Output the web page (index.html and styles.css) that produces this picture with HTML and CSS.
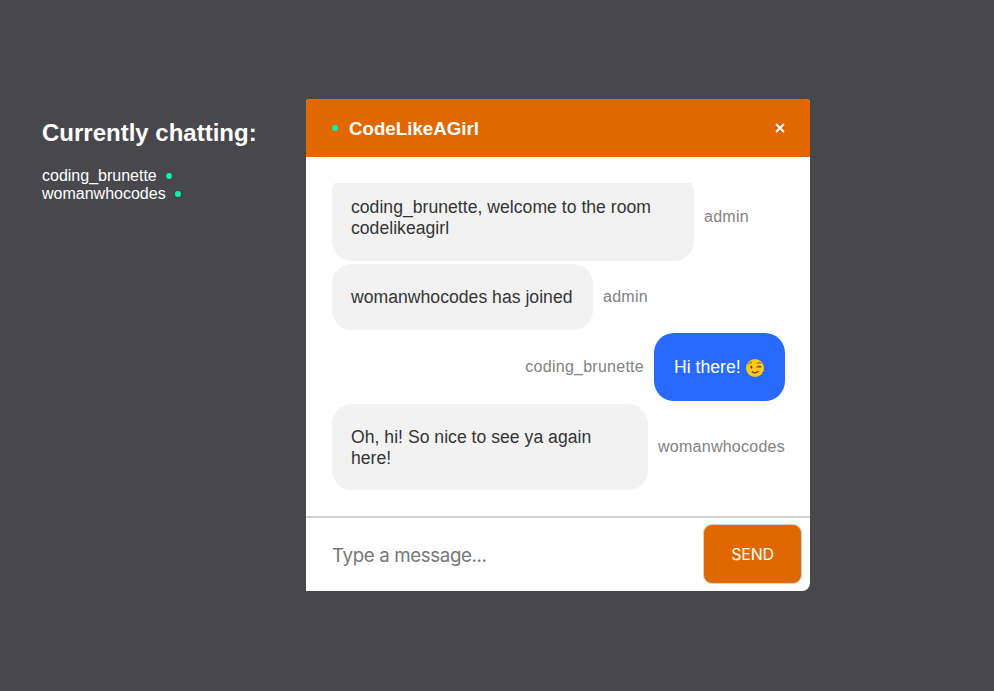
FILE: index.html
```html
<!DOCTYPE html>
<html lang="en">
<head>
<meta charset="utf-8">
<title>CodeLikeAGirl</title>
<link rel="stylesheet" href="styles.css">
</head>
<body>
<main class="page">
  <aside class="people">
    <h2>Currently chatting:</h2>
    <ul>
      <li><span>coding_brunette</span><i class="dot"></i></li>
      <li><span>womanwhocodes</span><i class="dot"></i></li>
    </ul>
  </aside>
  <section class="chat">
    <header class="bar">
      <i class="dot"></i>
      <h3>CodeLikeAGirl</h3>
      <svg class="close" viewBox="0 0 10 10"><path d="M1 1 9 9M9 1 1 9"/></svg>
    </header>
    <div class="messages">
      <div class="row"><p class="bubble welcome">coding_brunette, welcome to the room codelikeagirl</p><span class="name">admin</span></div>
      <div class="row"><p class="bubble joined">womanwhocodes has joined</p><span class="name">admin</span></div>
      <div class="row mine"><span class="name">coding_brunette</span><p class="bubble blue"><span>Hi there!</span>
        <svg class="wink" viewBox="0 0 18 18"><circle cx="9" cy="9" r="9" fill="#fcc91b"/><g fill="none" stroke="#67430b" stroke-linecap="round"><path d="M2.4 5.1Q3.5 3.1 5.6 3.2M11 4.3Q13 2.9 15 4" stroke-width=".8"/><path d="M10.7 8Q13 6.1 15.3 7.8L12.8 8.2" stroke-width="1"/><path d="M6.3 12.8Q9.1 15 12 12.6" stroke-width="1.3"/></g><ellipse cx="5.3" cy="8.1" rx="1" ry="1.6" fill="#67430b"/></svg></p></div>
      <div class="row"><p class="bubble reply">Oh, hi! So nice to see ya again here!</p><span class="name">womanwhocodes</span></div>
    </div>
    <form class="compose">
      <input type="text" placeholder="Type a message...">
      <button type="button">SEND</button>
    </form>
  </section>
</main>
</body>
</html>
```
FILE: styles.css
```css
* { box-sizing: border-box; }
body { margin: 0; background: #48474c; font-family: "Liberation Sans", Arial, sans-serif; }
h2, h3, p, ul { margin: 0; padding: 0; }
.page { display: flex; height: 691px; padding: 99px 0 0 42px; overflow: hidden; }
.people { width: 264px; padding-top: 20px; color: #fff; }
.people h2 { font-size: 24px; line-height: 28px; white-space: nowrap; }
.people ul { list-style: none; margin-top: 20px; }
.people li { display: flex; align-items: center; gap: 9px; height: 18px; font-size: 16px; line-height: 18px; }
.dot { flex: none; width: 6px; height: 6px; border-radius: 50%; background: #00f8a9; }
.chat { width: 504px; height: 492px; background: #fff; border-radius: 4px 4px 8px 0; overflow: hidden; }
.bar { display: flex; align-items: center; height: 58px; padding: 0 25px 0 26px; background: #e16800; color: #fff; }
.bar h3 { margin-left: 11px; padding-top: 1px; font-size: 18.72px; line-height: 22px; }
.close { width: 10px; height: 10px; margin-left: auto; fill: none; stroke: #fff; stroke-width: 1.9; }
.messages { display: flex; flex-direction: column; justify-content: flex-end; gap: 3px; height: 307px; margin: 26px 25px 26px 26px; overflow: hidden; }
.row { display: flex; align-items: center; gap: 10px; flex: none; }
.mine { justify-content: flex-end; }
.bubble { flex: none; height: 66px; padding: 23px 19px 19px; border-radius: 20px; background: #f2f2f2; color: #353535; font-size: 17.6px; line-height: 21px; letter-spacing: .02px; }
.welcome { width: 362px; height: 88px; padding-top: 24px; }
.joined { width: 261px; white-space: nowrap; }
.blue { display: flex; width: 131px; height: 68px; padding: 24px 20px 20px; gap: 5px; background: #2869ff; color: #fff; white-space: nowrap; }
.wink { flex: none; width: 18px; height: 18px; margin-top: 2px; }
.reply { width: 316px; height: 86px; }
.name { color: #828282; font-size: 16px; line-height: 18px; letter-spacing: .26px; white-space: nowrap; }
.compose { display: flex; height: 75px; padding: 6px 8px 7px 0; border-top: 2px solid #d3d3d3; }
.compose input { flex: 1; min-width: 0; padding: 2px 26px 0; border: 0; outline: 0; background: none; font: 18.7px Inter, sans-serif; letter-spacing: -.36px; }
.compose input::placeholder { color: #777; }
.compose button { width: 99px; height: 60px; padding: 0; border: 1px solid #d3d3d3; border-radius: 9px; background: #e16800; color: #fff; font: 16px Inter, sans-serif; letter-spacing: -.2px; }
```
